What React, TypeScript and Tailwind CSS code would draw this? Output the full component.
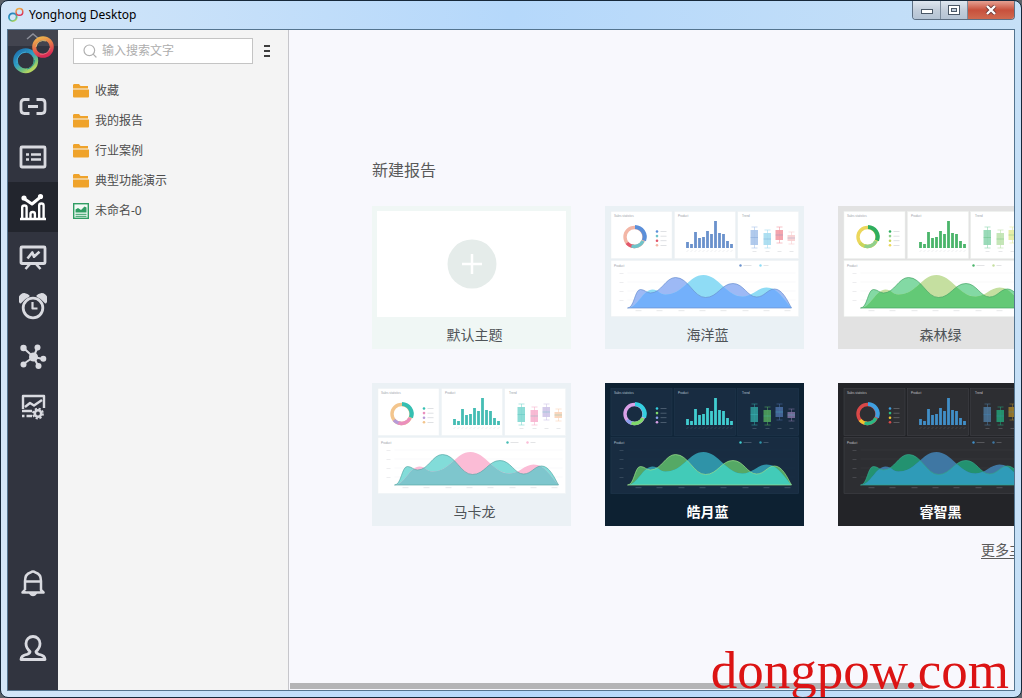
import React from 'react';
import { Search } from 'lucide-react';

interface Theme {
  id: string;
  name: string;
  card: string;
  label: string;
  gap: string;
  panel: string;
  line: string;
  text: string;
  bar: string;
  donut: string[];
  boxes: string[];
  waveA: string;
  waveB: string;
  overlap: string;
  stroke: string;
}

const lightLabel = 'text-[#4f5458]';
const darkLabel = 'font-bold text-white';

const themes: Theme[] = [
  {
    id: 'ocean',
    name: '海洋蓝',
    card: 'bg-[#eaf1f5]',
    label: lightLabel,
    gap: '#e9eff3',
    panel: '#ffffff',
    line: '#eef1f4',
    text: '#9aa0a8',
    bar: '#6b92cc',
    donut: ['#5b8fd9', '#6fc3c9', '#e2566b', '#f3b6a6'],
    boxes: ['#a9c4ea', '#a5dcf0', '#f39aa4', '#f8cfd0'],
    waveA: '#9db9f5',
    waveB: '#8fdcf5',
    overlap: '#73b0fb',
    stroke: '#6a8fd0',
  },
  {
    id: 'forest',
    name: '森林绿',
    card: 'bg-[#e2e2e2]',
    label: lightLabel,
    gap: '#e2e2e2',
    panel: '#ffffff',
    line: '#eef1ee',
    text: '#9aa0a8',
    bar: '#4bb56b',
    donut: ['#2fae5e', '#8fd08c', '#c9d65a', '#ecd75c'],
    boxes: ['#8fd6b0', '#bfe3b0', '#e6ec9f', '#f1e7a0'],
    waveA: '#83d9a4',
    waveB: '#c5dfa0',
    overlap: '#63c976',
    stroke: '#45a565',
  },
  {
    id: 'macaron',
    name: '马卡龙',
    card: 'bg-[#ebf1f5]',
    label: lightLabel,
    gap: '#ebf1f5',
    panel: '#ffffff',
    line: '#eef1f4',
    text: '#9aa0a8',
    bar: '#45bdb4',
    donut: ['#35bfb2', '#ea8fbd', '#b79ad8', '#f3c58d'],
    boxes: ['#82d8d2', '#f7b3cf', '#cfc5e8', '#fad3b8'],
    waveA: '#82dcd9',
    waveB: '#fbbcd6',
    overlap: '#7ec6cd',
    stroke: '#5aa9a8',
  },
  {
    id: 'moon',
    name: '皓月蓝',
    card: 'bg-[#0d2132]',
    label: darkLabel,
    gap: '#11263a',
    panel: '#182c41',
    line: '#20384e',
    text: '#b6c4d2',
    bar: '#41cdd0',
    donut: ['#35cfe0', '#7fd96b', '#8aa0ee', '#d9a0e6'],
    boxes: ['#2f9a9a', '#4fa15c', '#476a9e', '#7b6f9c'],
    waveA: '#55a965',
    waveB: '#2f93a8',
    overlap: '#42cbb8',
    stroke: '#9be08a',
  },
  {
    id: 'wise',
    name: '睿智黑',
    card: 'bg-[#232428]',
    label: darkLabel,
    gap: '#232428',
    panel: '#2d2e32',
    line: '#46474c',
    text: '#c4c4c8',
    bar: '#418fc8',
    donut: ['#3f9fe0', '#2bb884', '#efc52f', '#d94848'],
    boxes: ['#4a7396', '#249a73', '#9a7a2a', '#8a4747'],
    waveA: '#239270',
    waveB: '#3f77a3',
    overlap: '#2f9bb8',
    stroke: '#35a58a',
  },
];

const barHeights = [6, 4, 16, 10, 11, 17, 14, 27, 15, 14, 7, 4];
const boxPlots = [
  { x: 139, y: 19, h: 15 },
  { x: 152, y: 22, h: 12 },
  { x: 164, y: 19, h: 10 },
  { x: 176, y: 24, h: 6 },
];

const waveA =
  'M16 97C23 97 23 78.5 29 78.5C33 78.5 35 82 39 82C50 82 54 66.5 64 66.5C77 66.5 82 86.5 94 86.5C106 86.5 110 72.5 121.5 72.5C132 72.5 136 86 145 86C153 86 156 78 163 78C171 78 176 90 180 97Z';
const waveB =
  'M18 97C27 94 32 78.5 41 78.5C47 78.5 48 83.5 54 83.5C72 83.5 77 64 92 64C107 64 115 85.5 131 85.5C141 85.5 146 76.5 155 76.5C166 76.5 172 88 180 97Z';

const ThemePreview: React.FC<{ theme: Theme }> = ({ theme: t }) => (
  <svg viewBox="0 0 189 106" className="block w-full" aria-hidden="true">
    <defs>
      <clipPath id={`wave-${t.id}`}>
        <path d={waveA} />
      </clipPath>
    </defs>
    <rect width="189" height="106" fill={t.gap} />
    <g fill={t.panel} stroke={t.line} strokeWidth="0.5">
      <rect x="1" y="0.5" width="61" height="47" />
      <rect x="64.5" y="0.5" width="61" height="47" />
      <rect x="127.7" y="0.5" width="61" height="47" />
      <rect x="1" y="49.5" width="187.7" height="56" />
    </g>
    <g fill={t.text} fontSize="3" fontFamily="Liberation Sans, sans-serif">
      <text x="4" y="6">Sales statistics</text>
      <text x="68" y="6">Product</text>
      <text x="132" y="6">Trend</text>
      <text x="4" y="56">Product</text>
    </g>

    <g transform="translate(1.5 0)">
      {/* Donut */}
      <g fill="none" strokeWidth="3.4">
        <circle cx="23" cy="26" r="9.5" stroke={t.donut[3]} />
        <path d="M23 35.5A9.5 9.5 0 0 1 15.5 32" stroke={t.donut[2]} />
        <path d="M31.5 30A9.5 9.5 0 0 1 20 35" stroke={t.donut[1]} />
        <path d="M23.5 16A10 10 0 0 1 32.5 29.5" stroke={t.donut[0]} strokeWidth="4.2" />
      </g>
      {t.donut.map((color, i) => (
        <g key={color}>
          <circle cx="45.5" cy={20.5 + i * 4.6} r="1.3" fill={color} />
          <rect x="49" y={20.2 + i * 4.6} width="6" height="0.7" fill={t.text} opacity="0.45" />
        </g>
      ))}

      {/* Bars */}
      {barHeights.map((h, i) => (
        <g key={i}>
          <rect x={74.6 + i * 4} y={37 - h} width="2.8" height={h} fill={t.bar} />
          <path d={`M${75 + i * 4} 41l2-2`} stroke={t.text} strokeWidth="0.4" opacity="0.4" />
        </g>
      ))}

      {/* Box plots */}
      {boxPlots.map((b, i) => (
        <g key={b.x}>
          <path
            d={`M${b.x + 1} ${b.y - 3}h6m-3 0v${b.h + 6}m-3 0h6`}
            stroke={t.boxes[i]}
            strokeWidth="0.6"
            fill="none"
          />
          <rect x={b.x} y={b.y} width="7.5" height={b.h} fill={t.boxes[i]} opacity="0.9" />
          <path d={`M${b.x} ${b.y + b.h / 2}h7.5`} stroke={t.bar} strokeWidth="0.5" opacity="0.6" />
          <rect x={b.x + 2} y="40" width="4" height="0.6" fill={t.text} opacity="0.4" />
        </g>
      ))}

      {/* Area chart */}
      <path d="M16 62H184M16 71H184M16 80H184M16 89H184" stroke={t.line} strokeWidth="0.4" opacity="0.7" />
      <circle cx="129" cy="54.5" r="1.2" fill={t.bar} />
      <rect x="132" y="54.2" width="8" height="0.7" fill={t.text} opacity="0.4" />
      <circle cx="149" cy="54.5" r="1.2" fill={t.waveB} />
      <rect x="152" y="54.2" width="5" height="0.7" fill={t.text} opacity="0.4" />
      <path d={waveA} fill={t.waveA} />
      <path d={waveB} fill={t.waveB} />
      <path d={waveB} fill={t.overlap} clipPath={`url(#wave-${t.id})`} />
      <path d={waveA} fill="none" stroke={t.stroke} strokeWidth="0.7" />
      {[24, 45, 67, 88, 109, 131, 152, 173].map((x) => (
        <rect key={x} x={x} y="99.5" width="6" height="0.6" fill={t.text} opacity="0.4" />
      ))}
      {[62, 71, 80, 89].map((y) => (
        <rect key={y} x="8" y={y} width="4" height="0.6" fill={t.text} opacity="0.3" />
      ))}
    </g>
  </svg>
);

const Rings: React.FC<{ id: string }> = ({ id }) => (
  <>
    <defs>
      <linearGradient id={`${id}-cool`} x1="0" y1="0" x2="0.7" y2="1">
        <stop offset="0" stopColor="#1d6fae" />
        <stop offset="0.5" stopColor="#2f9ec4" />
        <stop offset="0.8" stopColor="#6fbf7f" />
        <stop offset="1" stopColor="#b5d560" />
      </linearGradient>
      <linearGradient id={`${id}-warm`} x1="0.2" y1="0" x2="0.5" y2="1">
        <stop offset="0" stopColor="#ecb04c" />
        <stop offset="0.45" stopColor="#e6764a" />
        <stop offset="1" stopColor="#d92c55" />
      </linearGradient>
    </defs>
    <circle cx="12.7" cy="24.7" r="10.2" fill="none" stroke={`url(#${id}-cool)`} strokeWidth="4.6" />
    <path d="M4 27a9.6 9.6 0 0 1 9-11" fill="none" stroke="#4fb6d8" strokeWidth="0.7" />
    <path d="M14 33a9 9 0 0 0 7.5-9" fill="none" stroke="#1f8f8f" strokeWidth="0.9" />
    <circle cx="30" cy="11" r="8.8" fill="none" stroke={`url(#${id}-warm)`} strokeWidth="4" />
    <path d="M23 11a7.5 7.5 0 0 1 10-6" fill="none" stroke="#f5dc83" strokeWidth="0.7" />
    <path d="M27 18a8 8 0 0 0 10-6" fill="none" stroke="#f08a92" strokeWidth="0.7" />
  </>
);

const NavButton: React.FC<{ label: string; active?: boolean; tall?: boolean; children: React.ReactNode }> = ({
  label,
  active,
  tall,
  children,
}) => (
  <button
    type="button"
    aria-label={label}
    className={`flex w-full shrink-0 items-center justify-center ${tall ? 'h-[65px]' : 'h-[50px]'} ${
      active ? 'bg-[#22252d] text-white' : 'text-[#d9dae0]'
    }`}
  >
    <svg
      viewBox="0 0 28 28"
      className="size-7"
      fill="none"
      stroke="currentColor"
      strokeWidth="2.8"
      strokeLinejoin="round"
      aria-hidden="true"
    >
      {children}
    </svg>
  </button>
);

const Sidebar: React.FC = () => (
  <nav className="flex w-[50px] shrink-0 flex-col bg-[#31343f] pb-[10px]">
    <svg viewBox="0 0 50 52" className="h-[52px] w-[50px] shrink-0" role="img" aria-label="Yonghong">
      <rect width="50" height="16" fill="#42444f" />
      <path d="M19 9l6-5 6 5" fill="none" stroke="#8d8f99" strokeWidth="1.5" />
      <g transform="translate(5 6)">
        <Rings id="side" />
      </g>
    </svg>
    <NavButton label="连接">
      <path d="M10.500 6.500H5.500Q2 6.500 2 10v7q0 3.500 3.500 3.500h5M17.500 6.500H22.500q3.500 0 3.500 3.500v7q0 3.500-3.500 3.500h-5M9 13.500h10" />
    </NavButton>
    <NavButton label="数据集">
      <rect x="2" y="4" width="24" height="20" rx="1" />
      <path d="M7 11.500h3M12 11.500H22M7 16.500h3M12 16.500H22" strokeWidth="2.4" />
    </NavButton>
    <NavButton label="报告" active>
      <path
        d="M3.200 26V14.500q0-2 2.200-2t2.200 2V26M11.500 26v-5q0-2 2.200-2t2.200 2v5M20.200 26V12.500q0-2 2.200-2t2.200 2V26M1 26h26"
        strokeWidth="2.4"
      />
      <path d="M5 5.500l8 5.500 8.500-7" strokeWidth="3" />
      <circle cx="5" cy="5" r="1.6" fill="currentColor" strokeWidth="2" />
      <circle cx="21.500" cy="3.500" r="1.600" fill="currentColor" strokeWidth="2" />
    </NavButton>
    <NavButton label="演示">
      <rect x="2" y="4" width="24" height="16.500" rx="1" />
      <path d="M8.500 15.500l4.800-6 1.700 4.200 5.500-5M11 21l-4.500 5M17 21l4.500 5" strokeWidth="2.600" />
    </NavButton>
    <NavButton label="定时任务">
      <circle cx="14" cy="15" r="9.800" />
      <path d="M13.500 9v6.500h5" strokeWidth="2.2" />
      <path
        d="M1.500 9.500A5 5 0 0 1 9.500 3Q4.500 5 1.500 9.500ZM26.500 9.500A5 5 0 0 0 18.500 3Q23.500 5 26.500 9.500Z"
        fill="currentColor"
        strokeWidth="2"
      />
    </NavButton>
    <NavButton label="深度分析">
      <path d="M4.500 5l10 9 4-9.500M14.500 14l-10 7M24 16l-9.500-2 4.500 8.500" strokeWidth="2" />
      <g fill="currentColor" stroke="none">
        <circle cx="14.500" cy="14" r="4.500" />
        <circle cx="4.500" cy="5" r="3.200" />
        <circle cx="18.500" cy="4.500" r="3" />
        <circle cx="4.500" cy="21.500" r="3" />
        <circle cx="24.300" cy="15.800" r="3" />
        <circle cx="19.500" cy="23" r="3" />
      </g>
    </NavButton>
    <NavButton label="系统管理">
      <path d="M4 16V3h21v12M6 14l5-4 4 2.500L23 7" strokeWidth="2.400" />
      <path d="M3 18h10M3 23h2.500M7.500 23H13" strokeWidth="2.400" />
      <circle cx="19" cy="20.500" r="3.200" strokeWidth="2.600" />
      <circle cx="19" cy="20.500" r="5" strokeWidth="1.800" strokeDasharray="2.200 1.730" />
    </NavButton>
    <div className="flex-1" />
    <NavButton label="消息" tall>
      <path
        d="M6 21v-9q0-7 5.500-8.500Q14 1.500 16.500 3.500 22 5 22 12v9l2.500 2.500h-21L6 21M6.500 12.500h15M11 24q3 4 6 0"
        strokeWidth="2.500"
      />
    </NavButton>
    <NavButton label="用户" tall>
      <path
        d="M11 17.500Q7 14 7 9.500a7 7 0 0 1 14 0Q21 14 17 17.500q0 2 3 2.800 6 1.200 6 5.200H2q0-4 6-5.200 3-.8 3-2.800Z"
        strokeWidth="2.800"
      />
    </NavButton>
  </nav>
);

const folders = ['收藏', '我的报告', '行业案例', '典型功能演示'];

const FolderIcon: React.FC = () => (
  <svg viewBox="0 0 16 14" className="h-[14px] w-4 shrink-0" fill="#efa32b" aria-hidden="true">
    <path d="M0 1.500Q0 0 1 0h5l1.500 2H15v2.500H0Z" />
    <path d="M0 5.500h16v7q0 1-1 1H1q-1 0-1-1Z" />
  </svg>
);

const ReportIcon: React.FC = () => (
  <svg viewBox="0 0 16 16" className="size-4 shrink-0" aria-hidden="true">
    <rect x="0.7" y="0.7" width="14.6" height="14.6" fill="#f2faf5" stroke="#2f9d63" strokeWidth="1.4" />
    <path d="M2.500 9.500V6.500L5 5l3 2 3.500-3.500 2 1v5Z" fill="#2f9d63" />
    <path d="M2.500 11.300h11M2.500 13.300h11" stroke="#2f9d63" strokeWidth="1" />
  </svg>
);

const Explorer: React.FC = () => (
  <aside className="w-[231px] shrink-0 border-r border-[#c6c6cb] bg-[#f4f4f4] px-[15px] pt-2 text-xs text-[#4c4c4c]">
    <div className="flex items-center gap-2">
      <label className="flex h-[26px] flex-1 items-center gap-1 border border-[#c4c4c4] bg-white px-2">
        <Search className="size-4 shrink-0 text-[#b0b0b0]" strokeWidth={1.8} />
        <input
          type="text"
          aria-label="搜索"
          placeholder="输入搜索文字"
          className="w-full min-w-0 bg-transparent outline-none placeholder:text-[#adadad]"
        />
      </label>
      <button type="button" aria-label="更多" className="flex w-3 flex-col items-center gap-[3px]">
        <span className="h-[2px] w-[6px] bg-[#3d3d3d]" />
        <span className="h-[2px] w-[6px] bg-[#3d3d3d]" />
        <span className="h-[2px] w-[6px] bg-[#3d3d3d]" />
      </button>
    </div>
    <ul className="mt-3">
      {folders.map((name) => (
        <li key={name}>
          <button type="button" className="flex h-[30px] w-full items-center gap-[6px]">
            <FolderIcon />
            {name}
          </button>
        </li>
      ))}
      <li>
        <button type="button" className="flex h-[30px] w-full items-center gap-[6px]">
          <ReportIcon />
          未命名-0
        </button>
      </li>
    </ul>
  </aside>
);

const ThemeCard: React.FC<{ name: string; card: string; label: string; children: React.ReactNode }> = ({
  name,
  card,
  label,
  children,
}) => (
  <button type="button" className={`flex w-[199px] flex-col p-[5px] pb-0 ${card}`}>
    {children}
    <span className={`flex h-8 w-full items-center justify-center pt-1 pl-[6px] text-sm ${label}`}>{name}</span>
  </button>
);

const NewReport: React.FC = () => (
  <main className="flex min-w-0 flex-1 flex-col overflow-hidden bg-[#f8f8fd]">
    <div className="flex w-max flex-1 flex-col justify-center px-[83px] pt-1">
      <h1 className="text-base text-[#5a5a5a]">新建报告</h1>
      <div className="mt-6 grid grid-cols-3 gap-[34px]">
        <ThemeCard name="默认主题" card="bg-[#f0f7f5]" label={lightLabel}>
          <div className="flex h-[106px] w-full items-center justify-center bg-white">
            <svg viewBox="0 0 50 50" className="size-[50px]" aria-hidden="true">
              <circle cx="25" cy="25" r="24.5" fill="#e5ecea" />
              <path d="M15 25h20M25 15v20" stroke="#ffffff" strokeWidth="2.5" />
            </svg>
          </div>
        </ThemeCard>
        {themes.map((theme) => (
          <ThemeCard key={theme.id} name={theme.name} card={theme.card} label={theme.label}>
            <ThemePreview theme={theme} />
          </ThemeCard>
        ))}
      </div>
      <a href="#themes" className="mt-4 self-end border-b border-[#5a5a5a] text-sm leading-4 text-[#5a5a5a]">
        更多主题
      </a>
    </div>
    <div className="px-px pb-px">
      <div className="h-[6px] w-7/8 bg-[#b4b4b6]" />
    </div>
  </main>
);

const TitleBar: React.FC = () => (
  <header className="flex h-7 shrink-0 items-start">
    <svg viewBox="0 0 42 38" className="mt-[6px] ml-px size-4" aria-hidden="true">
      <Rings id="title" />
    </svg>
    <span className="mt-[6px] ml-[5px] flex-1 text-xs text-black">Yonghong Desktop</span>
    <div className="flex h-[19px] overflow-hidden rounded-b border border-t-0 border-[#5d6f83]">
      <button
        type="button"
        aria-label="最小化"
        className="flex w-7 items-center justify-center border-r border-[#7b8b9c] bg-linear-to-b from-[#dfe7f0] via-[#c3cedb] to-[#b4c3d4]"
      >
        <svg viewBox="0 0 12 6" className="mt-1 h-[6px] w-3">
          <rect x="0.5" y="0.5" width="11" height="4" fill="#fff" stroke="#4a5766" />
        </svg>
      </button>
      <button
        type="button"
        aria-label="最大化"
        className="flex w-[27px] items-center justify-center border-r border-[#7b8b9c] bg-linear-to-b from-[#dfe7f0] via-[#c3cedb] to-[#b4c3d4]"
      >
        <svg viewBox="0 0 12 10" className="h-[10px] w-3">
          <rect x="0.5" y="0.5" width="11" height="9" fill="#fff" stroke="#4a5766" />
          <rect x="3.5" y="3.5" width="5" height="3" fill="#c3cedb" stroke="#4a5766" />
        </svg>
      </button>
      <button
        type="button"
        aria-label="关闭"
        className="flex w-[46px] items-center justify-center bg-linear-to-b from-[#e5a093] via-[#c8503c] to-[#cf6a50]"
      >
        <svg viewBox="0 0 12 10" className="h-[10px] w-3">
          <path d="M2 1l8 8M10 1L2 9" stroke="#6b3a38" strokeWidth="4" />
          <path d="M2 1l8 8M10 1L2 9" stroke="#fff" strokeWidth="2.4" />
        </svg>
      </button>
    </div>
  </header>
);

const App: React.FC = () => (
  <div className="h-screen bg-[#5b6168] font-['Noto_Sans','Noto_Sans_CJK_SC',sans-serif]">
    <div className="relative flex h-full flex-col overflow-hidden rounded-lg border border-[#16283a] bg-linear-to-r from-[#d3e6f8] via-[#b5d8fb] to-[#c6e0f7] px-[6px] pb-[6px]">
      <TitleBar />
      <div className="flex min-h-0 flex-1 border border-[#54748f]">
        <Sidebar />
        <Explorer />
        <NewReport />
      </div>
      <span className="pointer-events-none absolute right-3 bottom-0 font-['Liberation_Serif',serif] text-[53px] leading-none text-[#dc1414]">
        dongpow.com
      </span>
    </div>
  </div>
);

export default App;
